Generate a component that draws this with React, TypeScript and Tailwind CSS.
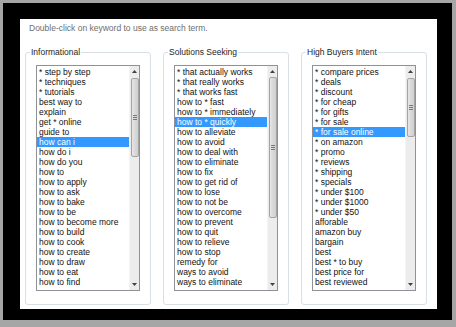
const informational = [
  '* step by step',
  '* techniques',
  '* tutorials',
  'best way to',
  'explain',
  'get * online',
  'guide to',
  'how can i',
  'how do i',
  'how do you',
  'how to',
  'how to apply',
  'how to ask',
  'how to bake',
  'how to be',
  'how to become more',
  'how to build',
  'how to cook',
  'how to create',
  'how to draw',
  'how to eat',
  'how to find',
]

const solutions = [
  '* that actually works',
  '* that really works',
  '* that works fast',
  'how to * fast',
  'how to * immediately',
  'how to * quickly',
  'how to alleviate',
  'how to avoid',
  'how to deal with',
  'how to eliminate',
  'how to fix',
  'how to get rid of',
  'how to lose',
  'how to not be',
  'how to overcome',
  'how to prevent',
  'how to quit',
  'how to relieve',
  'how to stop',
  'remedy for',
  'ways to avoid',
  'ways to eliminate',
]

const buyers = [
  '* compare prices',
  '* deals',
  '* discount',
  '* for cheap',
  '* for gifts',
  '* for sale',
  '* for sale online',
  '* on amazon',
  '* promo',
  '* reviews',
  '* shipping',
  '* specials',
  '* under $100',
  '* under $1000',
  '* under $50',
  'afforable',
  'amazon buy',
  'bargain',
  'best',
  'best * to buy',
  'best price for',
  'best reviewed',
]

type GroupProps = {
  title: string
  items: string[]
  selected: number
  thumbTop: string
  thumbHeight: string
}

function Arrow({ up }: { up?: boolean }) {
  return (
    <div className="flex h-[11px] items-center justify-center">
      <svg width="5" height="3" viewBox="0 0 5 3">
        {up ? <polygon points="0,3 5,3 2.5,0" fill="#404040" /> : <polygon points="0,0 5,0 2.5,3" fill="#404040" />}
      </svg>
    </div>
  )
}

function Group({ title, items, selected, thumbTop, thumbHeight }: GroupProps) {
  return (
    <fieldset className="w-[126px] h-[258px] border border-[#d8e0e6] rounded-[3px] pl-[10px] pt-[8px]">
      <legend className="ml-[-6px] px-[1px] h-[10px] leading-[10px] text-[#1e1e1e]">{title}</legend>
      <div className="flex w-[104px] h-[226px] border border-[#8e9196] bg-white">
        <div className="flex-1 pt-[1px] overflow-hidden">
          {items.map((item, i) => (
            <div
              key={item}
              className={
                i === selected
                  ? 'h-[10px] leading-[10px] pl-[2px] whitespace-nowrap bg-[#3399ff] text-white'
                  : 'h-[10px] leading-[10px] pl-[2px] whitespace-nowrap text-[#111]'
              }
            >
              {item}
            </div>
          ))}
        </div>
        <div className="flex w-[10px] flex-col bg-[#ececec] border-l border-[#f4f4f4]">
          <Arrow up />
          <div className="flex-1 px-[0.5px]">
            <div
              className={`flex flex-col items-center justify-center gap-[1px] rounded-[2px] border border-[#a4a4a4] bg-gradient-to-r from-[#e6e6e6] via-[#d9d9d9] to-[#cfcfcf] ${thumbTop} ${thumbHeight}`}
            >
              <div className="h-[1px] w-[4px] bg-[#777]" />
              <div className="h-[1px] w-[4px] bg-[#777]" />
              <div className="h-[1px] w-[4px] bg-[#777]" />
            </div>
          </div>
          <Arrow />
        </div>
      </div>
    </fieldset>
  )
}

export default function App() {
  return (
    <div className="w-[456px] h-[327px] bg-[#a6a6a6] pl-[3px] pt-[3px] text-[8.5px] font-['Liberation_Sans',Arial,sans-serif]">
      <div className="w-[449px] h-[317px] bg-black pl-[17px] pt-[16px]">
        <div className="w-[417px] h-[290px] bg-white">
          <p className="pl-[9px] pt-[4px] h-[14px] leading-[10px] text-[#6e6e6e]">
            Double-click on keyword to use as search term.
          </p>
          <div className="flex gap-[12px] pl-[5px] mt-[14px]">
            <Group title="Informational" items={informational} selected={7} thumbTop="mt-[1px]" thumbHeight="h-[79px]" />
            <Group title="Solutions Seeking" items={solutions} selected={5} thumbTop="mt-[0px]" thumbHeight="h-[141px]" />
            <Group title="High Buyers Intent" items={buyers} selected={6} thumbTop="mt-[1px]" thumbHeight="h-[59px]" />
          </div>
        </div>
      </div>
    </div>
  )
}
